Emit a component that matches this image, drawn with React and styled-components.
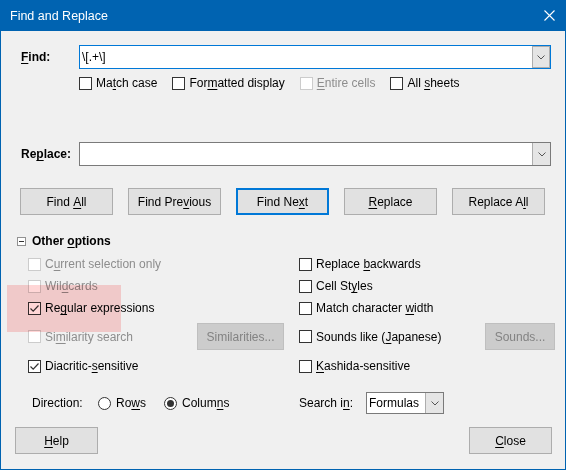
import styled, { createGlobalStyle } from "styled-components";

const GlobalStyle = createGlobalStyle`
  html, body {
    margin: 0;
    padding: 0;
    background: #f0f0f0;
  }
  body {
    font-family: "Liberation Sans", Arial, sans-serif;
    font-size: 12px;
    color: #000;
  }
  u {
    text-underline-offset: 2px;
  }
`;

const Window = styled.div`
  position: relative;
  z-index: 0;
  width: 566px;
  height: 470px;
  box-sizing: border-box;
  border: 1px solid #0063b1;
  border-top: none;
  background: #f0f0f0;
  display: flex;
  flex-direction: column;
`;

const TitleBar = styled.div`
  height: 31px;
  margin: 0 -1px;
  background: #0063b1;
  color: #fff;
  display: flex;
  align-items: center;
  justify-content: space-between;
  padding: 0 11px 0 10px;
  font-size: 12.5px;
`;

const FieldRow = styled.div`
  display: flex;
  align-items: center;
  margin-top: ${(p) => p.$top}px;
  padding-left: 20px;
`;

const FieldLabel = styled.div`
  width: 58px;
  font-weight: bold;
`;

const Combo = styled.div`
  display: flex;
  width: ${(p) => p.$width}px;
  height: ${(p) => p.$height}px;
  box-sizing: border-box;
  border: 1px solid ${(p) => (p.$focused ? "#0078d7" : "#7a7a7a")};
  background: #fff;
`;

const ComboText = styled.div`
  flex: 1;
  padding-left: 2px;
  display: flex;
  align-items: center;
`;

const ComboButton = styled.div`
  width: 18px;
  box-sizing: border-box;
  border: 1px solid #adadad;
  border-right: ${(p) => (p.$focused ? "1px solid #adadad" : "none")};
  border-top: ${(p) => (p.$focused ? "1px solid #adadad" : "none")};
  border-bottom: ${(p) => (p.$focused ? "1px solid #adadad" : "none")};
  background: #e5e5e5;
  display: flex;
  align-items: center;
  justify-content: center;
`;

const CheckRow = styled.div`
  display: flex;
  gap: 15px;
  margin-top: 7px;
  padding-left: 78px;
  height: 14px;
  align-items: center;
`;

const CheckItem = styled.div`
  display: flex;
  align-items: center;
  gap: 4px;
  white-space: nowrap;
  color: ${(p) => (p.$disabled ? "#8d8d8d" : "#000")};
`;

const Box = styled.span`
  width: 13px;
  height: 13px;
  box-sizing: border-box;
  flex: none;
  border: 1px solid ${(p) => (p.$disabled ? "#cccccc" : "#333")};
  background: #fff;
  display: inline-flex;
  align-items: center;
  justify-content: center;
`;

const RadioCircle = styled.span`
  width: 13px;
  height: 13px;
  box-sizing: border-box;
  flex: none;
  border-radius: 50%;
  border: 1px solid #333;
  background: #fff;
  display: inline-flex;
  align-items: center;
  justify-content: center;
  &::after {
    content: "";
    width: 7px;
    height: 7px;
    border-radius: 50%;
    background: ${(p) => (p.$checked ? "#333" : "transparent")};
  }
`;

const ButtonRow = styled.div`
  display: flex;
  gap: 15px;
  margin-top: 22px;
  padding-left: 19px;
`;

const Button = styled.div`
  width: ${(p) => p.$width || 93}px;
  height: 27px;
  box-sizing: border-box;
  flex: none;
  display: flex;
  align-items: center;
  justify-content: center;
  background: ${(p) => (p.$disabled ? "#cccccc" : "#e1e1e1")};
  border: ${(p) =>
    p.$default
      ? "2px solid #0078d7"
      : p.$disabled
      ? "1px solid #bfbfbf"
      : "1px solid #adadad"};
  color: ${(p) => (p.$disabled ? "#838383" : "#000")};
  white-space: nowrap;
`;

const SectionHeader = styled.div`
  display: flex;
  align-items: center;
  gap: 6px;
  margin-top: 18px;
  padding-left: 16px;
  height: 16px;
  font-weight: bold;
`;

const Toggle = styled.span`
  width: 9px;
  height: 9px;
  box-sizing: border-box;
  border: 1px solid #919191;
  background: #fff;
  display: inline-flex;
  align-items: center;
  justify-content: center;
  &::after {
    content: "";
    width: 5px;
    height: 1px;
    background: #333;
  }
`;

const OptionsGrid = styled.div`
  display: grid;
  grid-template-columns: 256px 256px;
  column-gap: 15px;
  margin-top: 4px;
  padding-left: 27px;
`;

const OptionCell = styled.div`
  display: flex;
  align-items: center;
  height: ${(p) => p.$height || 22}px;
  margin-top: ${(p) => p.$top || 0}px;
`;

const Spacer = styled.div`
  flex: 1;
`;

const BottomGrid = styled.div`
  display: grid;
  grid-template-columns: 252px auto;
  column-gap: 15px;
  margin-top: 15px;
  padding-left: 31px;
  height: 22px;
  align-items: center;
`;

const InlineGroup = styled.div`
  display: flex;
  align-items: center;
`;

const InlineLabel = styled.div`
  width: ${(p) => p.$width}px;
  white-space: nowrap;
`;

const RadioItem = styled.div`
  display: flex;
  align-items: center;
  gap: 5px;
  margin-right: 18px;
`;

const Footer = styled.div`
  display: flex;
  justify-content: space-between;
  margin-top: 13px;
  padding: 0 13px 0 14px;
`;

const Highlight = styled.div`
  position: absolute;
  left: 6px;
  top: 285px;
  width: 114px;
  height: 47px;
  background: #ffd6d6;
  mix-blend-mode: multiply;
  pointer-events: none;
`;

const Chevron = () => (
  <svg width="8" height="5" viewBox="0 0 8 5">
    <path d="M0.5 0.5 L4 4 L7.5 0.5" fill="none" stroke="#555" strokeWidth="1" />
  </svg>
);

const CloseIcon = () => (
  <svg width="11" height="11" viewBox="0 0 11 11">
    <path d="M0.5 0.5 L10.5 10.5 M10.5 0.5 L0.5 10.5" stroke="#fff" strokeWidth="1.1" />
  </svg>
);

const Check = () => (
  <svg width="11" height="11" viewBox="0 0 11 11">
    <path d="M1.5 5.5 L4.2 8.2 L9.5 2.5" fill="none" stroke="#333" strokeWidth="1.2" />
  </svg>
);

const Checkbox = ({ checked, disabled, children }) => (
  <CheckItem $disabled={disabled}>
    <Box $disabled={disabled}>{checked && <Check />}</Box>
    <span>{children}</span>
  </CheckItem>
);

const Radio = ({ checked, children }) => (
  <RadioItem>
    <RadioCircle $checked={checked} />
    <span>{children}</span>
  </RadioItem>
);

export default function App() {
  return (
    <>
      <GlobalStyle />
      <Window>
        <TitleBar>
          <span>Find and Replace</span>
          <CloseIcon />
        </TitleBar>

        <FieldRow $top={14}>
          <FieldLabel>
            <u>F</u>ind:
          </FieldLabel>
          <Combo $width={472} $height={24} $focused>
            <ComboText>\[.+\]</ComboText>
            <ComboButton $focused>
              <Chevron />
            </ComboButton>
          </Combo>
        </FieldRow>

        <CheckRow>
          <Checkbox>
            Ma<u>t</u>ch case
          </Checkbox>
          <Checkbox>
            For<u>m</u>atted display
          </Checkbox>
          <Checkbox disabled>
            <u>E</u>ntire cells
          </Checkbox>
          <Checkbox>
            All <u>s</u>heets
          </Checkbox>
        </CheckRow>

        <FieldRow $top={52}>
          <FieldLabel>
            Re<u>p</u>lace:
          </FieldLabel>
          <Combo $width={472} $height={24}>
            <ComboText />
            <ComboButton>
              <Chevron />
            </ComboButton>
          </Combo>
        </FieldRow>

        <ButtonRow>
          <Button>
            Find&nbsp;<u>A</u>ll
          </Button>
          <Button>
            Find Pre<u>v</u>ious
          </Button>
          <Button $default>
            Find Ne<u>x</u>t
          </Button>
          <Button>
            <u>R</u>eplace
          </Button>
          <Button>
            Replace A<u>l</u>l
          </Button>
        </ButtonRow>

        <SectionHeader>
          <Toggle />
          <span>
            Other <u>o</u>ptions
          </span>
        </SectionHeader>

        <OptionsGrid>
          <OptionCell>
            <Checkbox disabled>
              C<u>u</u>rrent selection only
            </Checkbox>
          </OptionCell>
          <OptionCell>
            <Checkbox>
              Replace <u>b</u>ackwards
            </Checkbox>
          </OptionCell>

          <OptionCell>
            <Checkbox disabled>
              Wil<u>d</u>cards
            </Checkbox>
          </OptionCell>
          <OptionCell>
            <Checkbox>
              Cell St<u>y</u>les
            </Checkbox>
          </OptionCell>

          <OptionCell>
            <Checkbox checked>
              Re<u>g</u>ular expressions
            </Checkbox>
          </OptionCell>
          <OptionCell>
            <Checkbox>
              Match character <u>w</u>idth
            </Checkbox>
          </OptionCell>

          <OptionCell $height={27} $top={4}>
            <Checkbox disabled>
              Si<u>m</u>ilarity search
            </Checkbox>
            <Spacer />
            <Button $width={87} $disabled>
              Similarities...
            </Button>
          </OptionCell>
          <OptionCell $height={27} $top={4}>
            <Checkbox>
              Sounds like (<u>J</u>apanese)
            </Checkbox>
            <Spacer />
            <Button $width={70} $disabled>
              Sounds...
            </Button>
          </OptionCell>

          <OptionCell $top={5}>
            <Checkbox checked>
              Diacritic-<u>s</u>ensitive
            </Checkbox>
          </OptionCell>
          <OptionCell $top={5}>
            <Checkbox>
              <u>K</u>ashida-sensitive
            </Checkbox>
          </OptionCell>
        </OptionsGrid>

        <BottomGrid>
          <InlineGroup>
            <InlineLabel $width={66}>Direction:</InlineLabel>
            <Radio>
              Ro<u>w</u>s
            </Radio>
            <Radio checked>
              Colum<u>n</u>s
            </Radio>
          </InlineGroup>
          <InlineGroup>
            <InlineLabel $width={67}>
              Search i<u>n</u>:
            </InlineLabel>
            <Combo $width={78} $height={22}>
              <ComboText>Formulas</ComboText>
              <ComboButton>
                <Chevron />
              </ComboButton>
            </Combo>
          </InlineGroup>
        </BottomGrid>

        <Footer>
          <Button $width={83}>
            <u>H</u>elp
          </Button>
          <Button $width={83}>
            <u>C</u>lose
          </Button>
        </Footer>

        <Highlight />
      </Window>
    </>
  );
}
